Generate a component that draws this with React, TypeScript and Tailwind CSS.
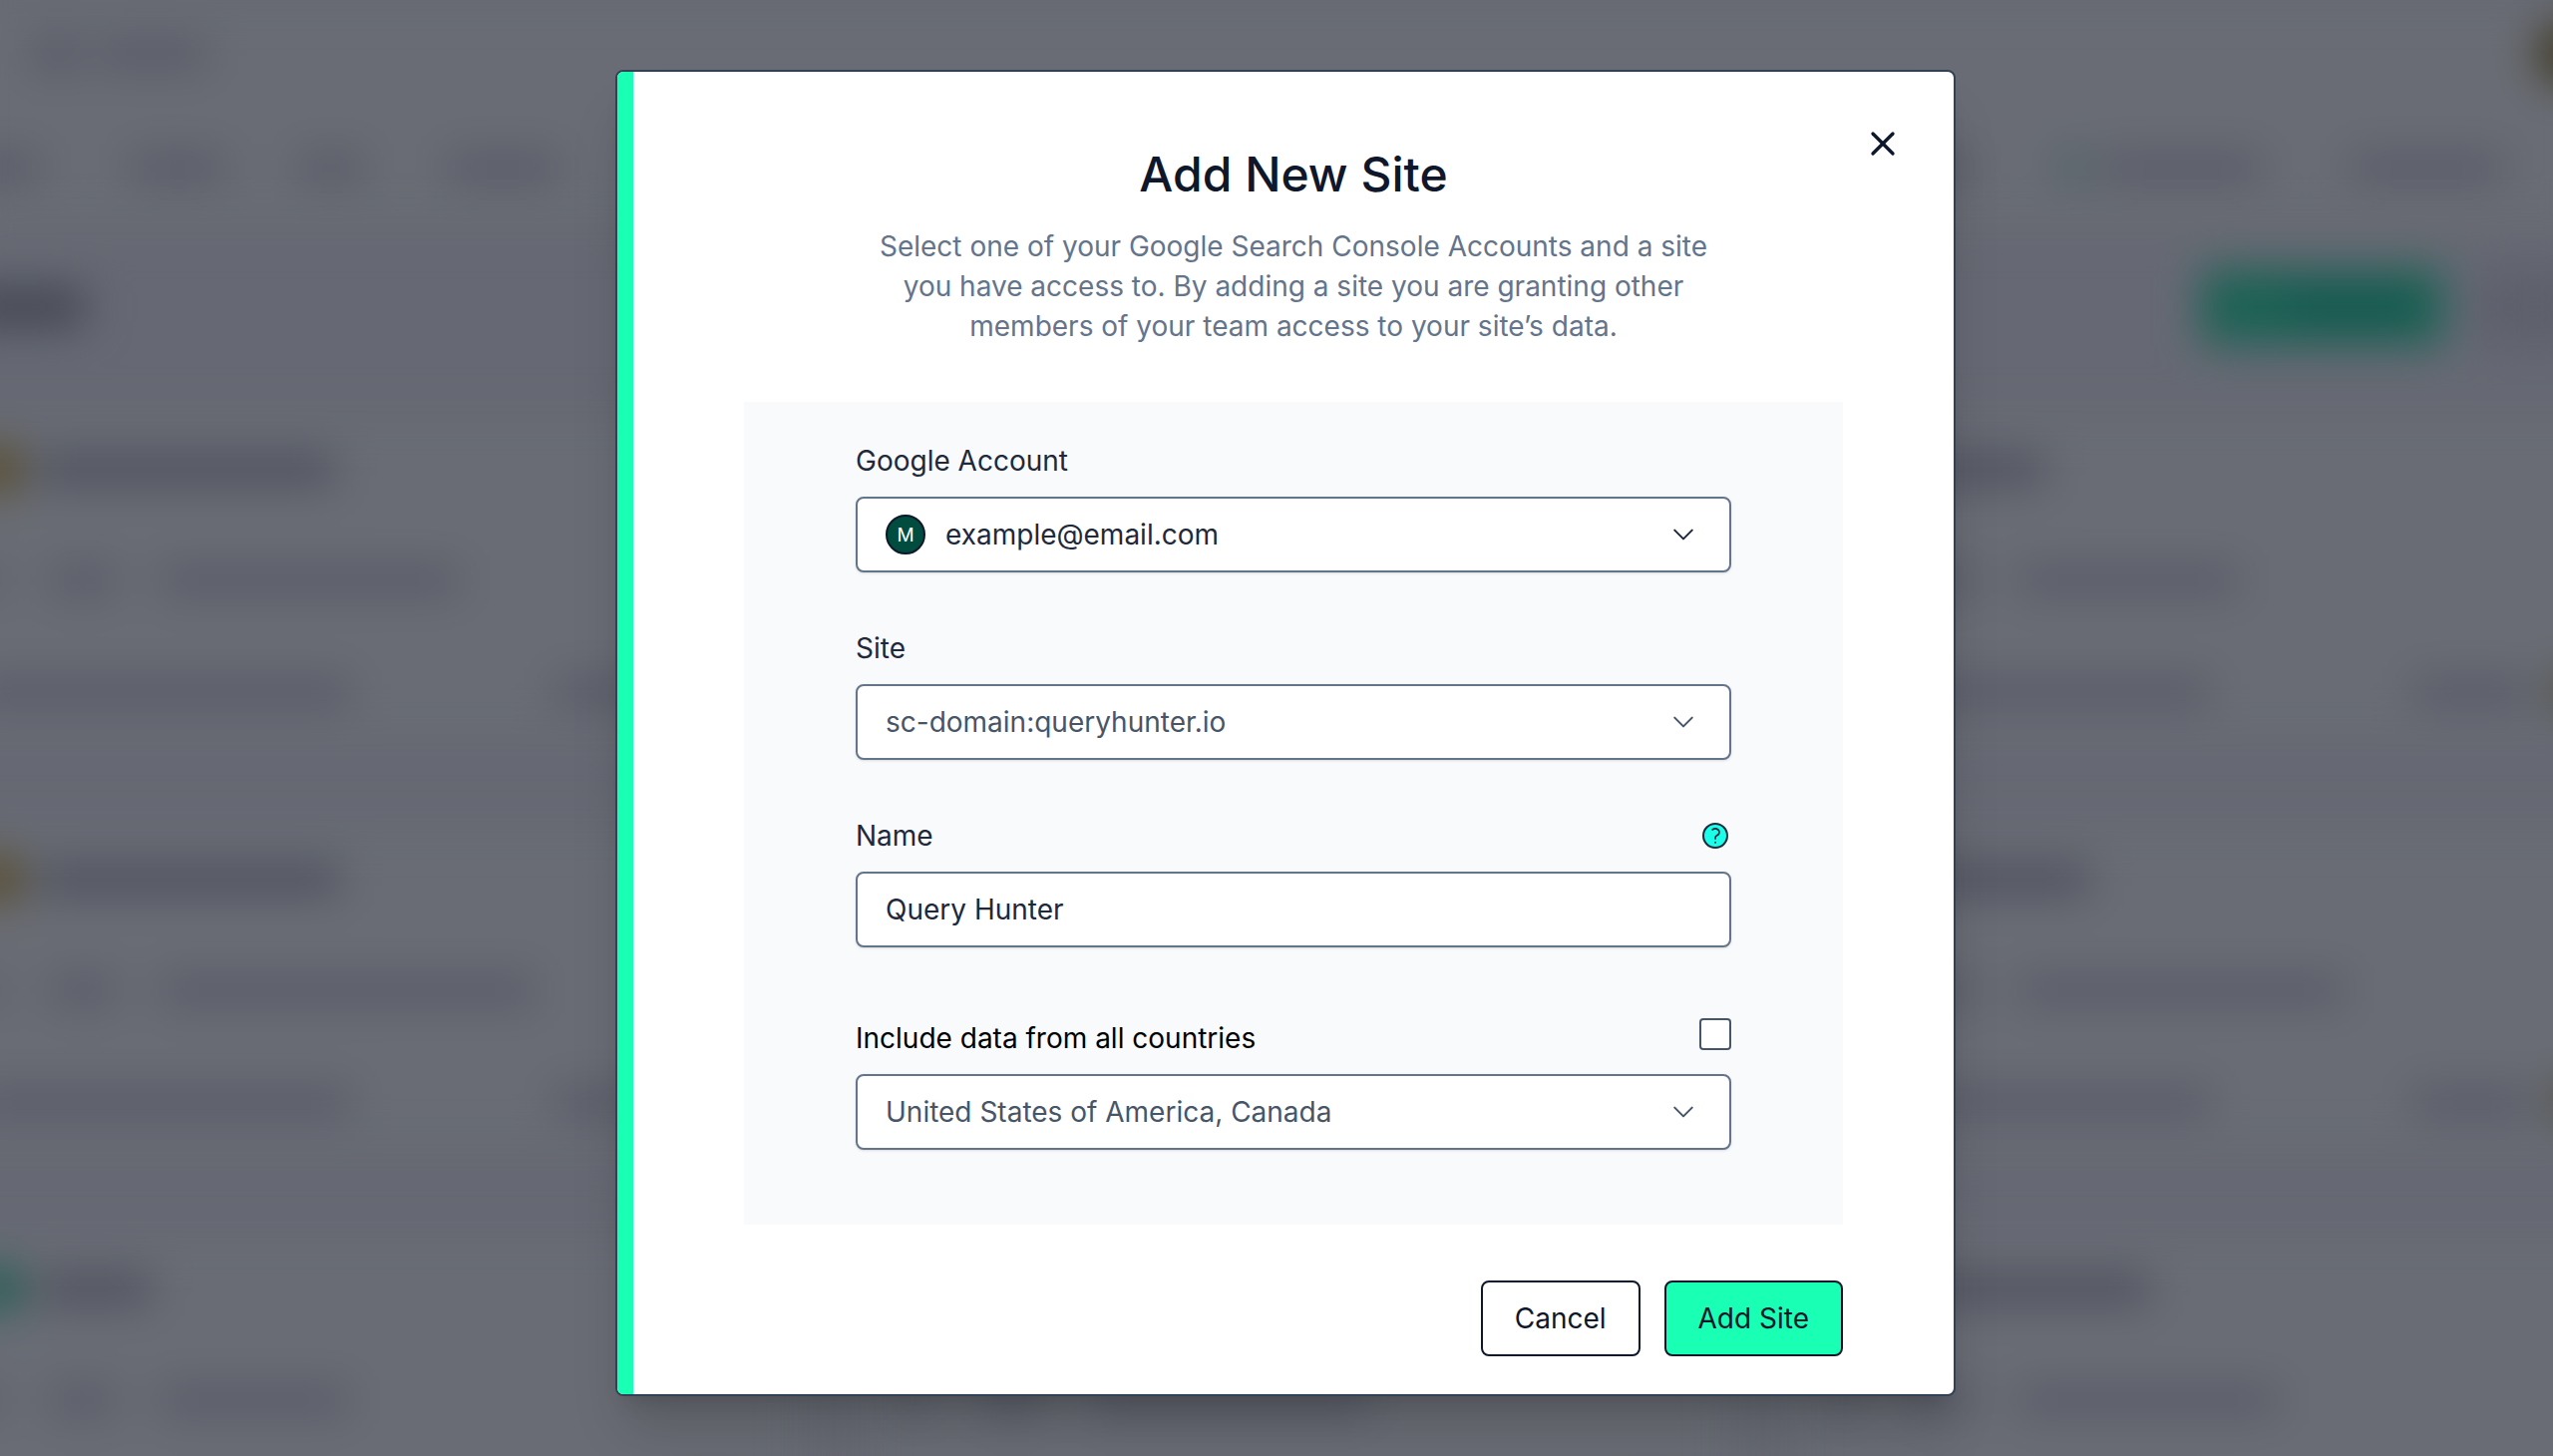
import React, { useState } from 'react';
import { X } from 'lucide-react';

const ChevronIcon: React.FC = () => (
  <svg
    viewBox="0 0 24 24"
    fill="none"
    stroke="currentColor"
    strokeWidth={1.8}
    strokeLinecap="round"
    strokeLinejoin="round"
    className="pointer-events-none absolute inset-y-0 right-[34px] my-auto size-7"
    aria-hidden="true"
  >
    <path d="m19.5 8.25-7.5 7.5-7.5-7.5" />
  </svg>
);

const HelpIcon: React.FC = () => (
  <svg viewBox="0 0 24 24" className="size-8" aria-hidden="true">
    <circle cx="12" cy="12" r="9" fill="#19ffe9" stroke="#1e293b" strokeWidth={1.5} />
    <path
      d="M9.879 7.519c1.171-1.025 3.071-1.025 4.242 0 1.172 1.025 1.172 2.687 0 3.712-.203.179-.43.326-.67.442-.745.361-1.45.999-1.45 1.827v.75"
      fill="none"
      stroke="#1e293b"
      strokeWidth={1.3}
      strokeLinecap="round"
    />
    <circle cx="12" cy="17.1" r="0.7" fill="#1e293b" />
  </svg>
);

interface SiteCard {
  heading: string;
  detail: string;
  avatar: string;
}

const CARDS: SiteCard[] = [
  { heading: 'w-[300px]', detail: 'w-[300px]', avatar: 'bg-[#54451c]' },
  { heading: 'w-[240px]', detail: 'w-[280px]', avatar: 'bg-[#54451c]' },
  { heading: 'w-[150px]', detail: 'w-[220px]', avatar: 'bg-[#505360]' },
  { heading: 'w-[305px]', detail: 'w-[376px]', avatar: 'bg-[#54451c]' },
  { heading: 'w-[240px]', detail: 'w-[280px]', avatar: 'bg-[#54451c]' },
  { heading: 'w-[195px]', detail: 'w-[326px]', avatar: 'bg-[#505360]' },
  { heading: 'w-[115px]', detail: 'w-[190px]', avatar: 'bg-[#165a4d]' },
  { heading: 'w-[240px]', detail: 'w-[280px]', avatar: 'bg-[#505360]' },
  { heading: 'w-[255px]', detail: 'w-[260px]', avatar: 'bg-[#505360]' },
];

/* Dimmed dashboard behind the dialog */
const Backdrop: React.FC = () => (
  <div className="absolute inset-0 overflow-hidden bg-[#666973]" aria-hidden="true">
    <div className="blur-[22px]">
      <div className="-mx-10 bg-[#696c74] px-10">
        <div className="flex h-[108px] items-center gap-4">
          <div className="ml-8 h-8 w-12 rounded-full bg-[#545664]"></div>
          <div className="h-6 w-[112px] bg-[#545664]"></div>
          <div className="-mr-12 ml-auto size-16 rounded-full bg-[#3d3720]"></div>
        </div>
        <div className="flex h-[120px] items-center">
          <div className="-ml-10 h-6 w-20 bg-[#545664]"></div>
          <div className="ml-[90px] h-6 w-24 bg-[#545664]"></div>
          <div className="ml-[74px] h-6 w-16 bg-[#545664]"></div>
          <div className="ml-[84px] h-6 w-28 bg-[#545664]"></div>
          <div className="ml-auto h-6 w-24 bg-[#545664]"></div>
          <div className="ml-[90px] size-7 rounded-full bg-[#3f5d61]"></div>
          <div className="ml-4 h-6 w-[158px] bg-[#545664]"></div>
          <div className="mr-[51px] ml-[90px] h-6 w-[152px] bg-[#545664]"></div>
        </div>
      </div>

      <div className="mt-1 flex h-[152px] items-center">
        <div className="-ml-10 h-9 w-[125px] bg-[#40434e]"></div>
        <div className="ml-auto flex h-[76px] w-[242px] items-center justify-end bg-[#1c6255] px-7">
          <div className="h-6 w-32 bg-[#12544a]"></div>
        </div>
        <div className="-mr-10 ml-8 h-[76px] w-[118px] bg-[#5e606c]"></div>
      </div>

      <div className="mt-9 -mr-[108px] -ml-16 grid grid-cols-3 gap-x-16 gap-y-[91px]">
        {CARDS.map((card, index) => (
          <div key={index} className="h-80 bg-[#696c74] px-9 pt-[26px]">
            <div className="flex h-12 items-center gap-4">
              <div className={`size-12 rounded-full ${card.avatar}`}></div>
              <div className={`h-7 bg-[#4b4e5b] ${card.heading}`}></div>
            </div>
            <div className="mt-16 flex h-12 items-center">
              <div className="h-6 w-7 bg-[#545664]"></div>
              <div className="ml-[50px] h-6 w-[66px] bg-[#545664]"></div>
              <div className={`ml-11 h-6 bg-[#545664] ${card.detail}`}></div>
            </div>
            <div className="mt-16 flex h-12 items-center">
              <div className="h-6 w-[380px] bg-[#545664]"></div>
              <div className="ml-[204px] h-6 w-[118px] bg-[#545664]"></div>
              <div className="ml-6 size-11 rounded-full bg-[#4a4a36]"></div>
            </div>
          </div>
        ))}
      </div>
    </div>
  </div>
);

interface SelectFieldProps {
  id: string;
  options: string[];
  tone: string;
  padding: string;
  children?: React.ReactNode;
}

const SelectField: React.FC<SelectFieldProps> = ({ id, options, tone, padding, children }) => (
  <div className={`relative ${tone}`}>
    <select
      id={id}
      className={`h-[76px] w-full appearance-none rounded-lg border-2 border-[#64748b] bg-white pr-20 shadow-sm ${padding}`}
    >
      {options.map((option) => (
        <option key={option}>{option}</option>
      ))}
    </select>
    {children}
    <ChevronIcon />
  </div>
);

const App: React.FC = () => {
  const [name, setName] = useState('Query Hunter');
  const [allCountries, setAllCountries] = useState(false);

  return (
    <div className="relative min-h-screen font-['Inter',sans-serif] text-[28px] leading-[40px]">
      <Backdrop />

      <div className="relative flex justify-center pt-[70px] pb-[60px] pl-[18px]">
        <div
          role="dialog"
          aria-modal="true"
          aria-labelledby="dialog-title"
          className="relative flex w-full max-w-[1344px] overflow-hidden rounded-lg border-2 border-[#334155] bg-white shadow-[0_40px_50px_-10px_rgba(0,0,0,0.15),0_16px_20px_-12px_rgba(0,0,0,0.15)]"
        >
          <div className="w-4 shrink-0 bg-[#19ffb4]"></div>

          <button
            type="button"
            aria-label="Close"
            className="absolute top-[52px] right-[51px] text-[#0f172a]"
          >
            <X size={40} strokeWidth={2} />
          </button>

          <form
            className="flex-1 px-[111px] pt-[75px] pb-[38px]"
            onSubmit={(event) => event.preventDefault()}
          >
            <div className="px-28 text-center">
              <h1 id="dialog-title" className="text-[48px] leading-[56px] font-medium text-[#0f172a]">
                Add New Site
              </h1>
              <p className="mt-6 text-[#64748b]">
                Select one of your Google Search Console Accounts and a site you have access to. By
                adding a site you are granting other members of your team access to your site’s
                data.
              </p>
            </div>

            <div className="mt-14 bg-[#f8fafc] px-28 pt-[39px] pb-[75px]">
              {/* Google account */}
              <label htmlFor="account" className="mb-4 block text-[#1e293b]">
                Google Account
              </label>
              <SelectField
                id="account"
                options={['example@email.com']}
                tone="text-[#1e293b]"
                padding="pl-[88px]"
              >
                <span className="pointer-events-none absolute inset-y-0 left-[30px] my-auto flex size-10 items-center justify-center rounded-full border-2 border-[#0f172a] bg-[#004d40] text-[19px] leading-none text-white">
                  M
                </span>
              </SelectField>

              {/* Site */}
              <label htmlFor="site" className="mt-14 mb-4 block text-[#1e293b]">
                Site
              </label>
              <SelectField
                id="site"
                options={['sc-domain:queryhunter.io']}
                tone="text-[#475569]"
                padding="pl-7"
              />

              {/* Name */}
              <div className="mt-14 mb-4 flex items-center justify-between">
                <label htmlFor="name" className="text-[#1e293b]">
                  Name
                </label>
                <button type="button" aria-label="About the name">
                  <HelpIcon />
                </button>
              </div>
              <input
                id="name"
                type="text"
                value={name}
                onChange={(event) => setName(event.target.value)}
                className="block h-[76px] w-full rounded-lg border-2 border-[#64748b] bg-white px-7 text-[#1e293b] shadow-sm"
              />

              {/* Countries */}
              <div className="mt-[71px] mb-4 flex items-start justify-between">
                <label htmlFor="all-countries" className="text-black">
                  Include data from all countries
                </label>
                <input
                  id="all-countries"
                  type="checkbox"
                  checked={allCountries}
                  onChange={(event) => setAllCountries(event.target.checked)}
                  className="size-8 appearance-none rounded-sm border-2 border-[#475569] bg-white checked:bg-[#19ffb4]"
                />
              </div>
              <SelectField
                id="countries"
                options={['United States of America, Canada']}
                tone="text-[#475569]"
                padding="pl-7"
              />
            </div>

            <div className="mt-14 flex justify-end gap-6">
              <button
                type="button"
                className="h-[76px] rounded-lg border-2 border-[#0f172a] bg-white px-8 text-[#0f172a]"
              >
                Cancel
              </button>
              <button
                type="submit"
                className="h-[76px] rounded-lg border-2 border-[#0f172a] bg-[#19ffb4] px-8 text-[#0f172a]"
              >
                Add Site
              </button>
            </div>
          </form>
        </div>
      </div>
    </div>
  );
};

export default App;
